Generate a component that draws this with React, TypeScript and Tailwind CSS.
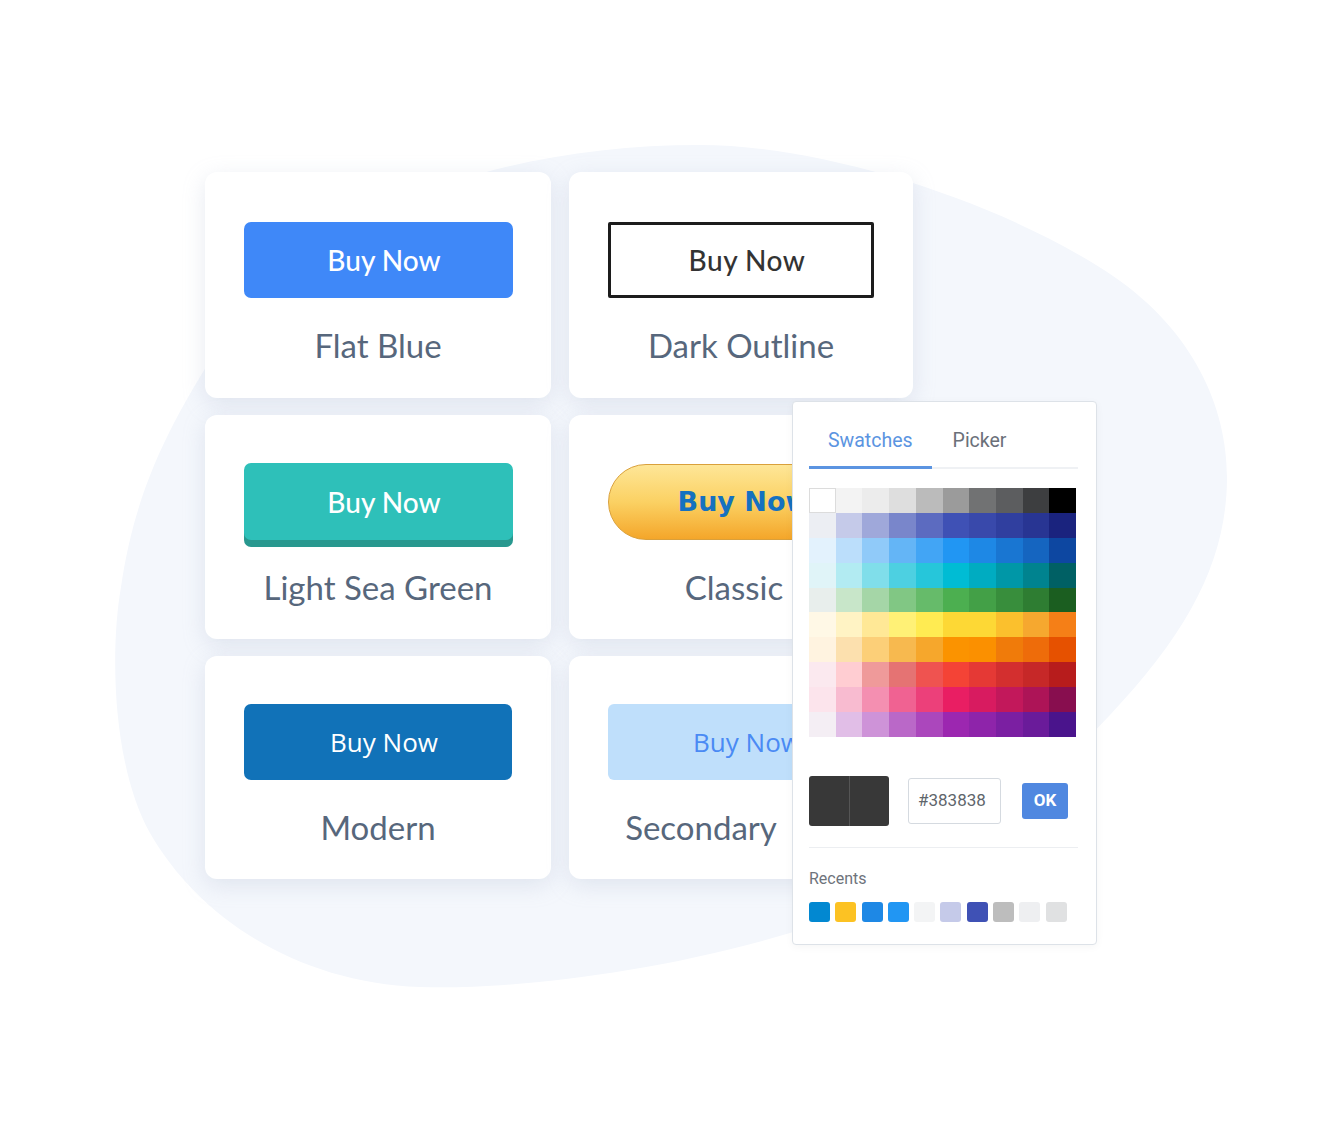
import React from 'react';

const SWATCHES: string[][] = [
  ['#ffffff', '#f3f3f3', '#ececec', '#dedede', '#bbbbbb', '#9b9b9b', '#717273', '#5c5d5f', '#3d3e40', '#000000'],
  ['#eceef3', '#c5cae9', '#9fa8da', '#7986cb', '#5c6bc0', '#3f51b5', '#3949ab', '#303f9f', '#283593', '#1a237e'],
  ['#e3f2fd', '#bbdefb', '#90caf9', '#64b5f6', '#42a5f5', '#2196f3', '#1e88e5', '#1976d2', '#1565c0', '#0d47a1'],
  ['#e0f4f8', '#b2ebf2', '#80deea', '#4dd0e1', '#26c6da', '#00bcd4', '#00acc1', '#0097a7', '#00838f', '#006064'],
  ['#e8eeec', '#c8e6c9', '#a5d6a7', '#81c784', '#66bb6a', '#4caf50', '#43a047', '#388e3c', '#2e7d32', '#1b5e20'],
  ['#fff8e6', '#fff3c4', '#ffe896', '#fff176', '#ffeb52', '#fdd835', '#fdd835', '#fbc02d', '#f6a82f', '#f57f17'],
  ['#fff3e0', '#fce0ae', '#fccf78', '#f7b94f', '#f6a72c', '#fb9300', '#fb9000', '#f07b0a', '#ee6c0a', '#e65100'],
  ['#fbe9ef', '#ffcdd2', '#ef9a9a', '#e57373', '#ef5350', '#f44336', '#e53935', '#d32f2f', '#c62828', '#b71c1c'],
  ['#fce4ec', '#f8bbd0', '#f48fb1', '#f06292', '#ec407a', '#e91e63', '#d81b60', '#c2185b', '#ad1457', '#880e4f'],
  ['#f4eef4', '#e1bee7', '#ce93d8', '#ba68c8', '#ab47bc', '#9c27b0', '#8e24aa', '#7b1fa2', '#6a1b9a', '#4a148c'],
];

const RECENTS = ['#0288d1', '#fcc223', '#1e88e5', '#2196f3', '#f3f4f5', '#c5cae9', '#3f51b5', '#bdbdbd', '#eeeff1', '#e0e1e2'];

function Card({
  pt,
  label,
  labelClass = '',
  children,
}: {
  pt: string;
  label: string;
  labelClass?: string;
  children: React.ReactNode;
}) {
  return (
    <div className={`flex flex-col items-center overflow-hidden rounded-[12px] bg-white shadow-[0_6px_22px_rgba(165,178,202,0.27)] ${pt}`}>
      {children}
      <div className={`mt-[27px] whitespace-nowrap font-['Lato',sans-serif] text-[33px] leading-[40px] text-[#57677c] ${labelClass}`}>
        {label}
      </div>
    </div>
  );
}

function Picker() {
  return (
    <div className="absolute left-[587px] top-[229px] z-10 h-[544px] w-[305px] rounded-[4px] border border-[#dde2e8] bg-white pl-[16px] pr-[18px] pt-[24px] font-['Roboto',sans-serif] shadow-[0_2px_8px_rgba(0,0,0,0.04)]">
      <div className="relative flex">
        <div className="absolute bottom-0 left-0 right-0 h-[2px] bg-[#eff1f4]" />
        <div className="relative border-b-[3px] border-[#5b94e1] px-[19px] pb-[10px] text-[19.5px] leading-[30px] text-[#5b94e1]">
          Swatches
        </div>
        <div className="relative border-b-[3px] border-transparent px-[21px] pb-[10px] text-[19.5px] leading-[30px] text-[#6b7079]">
          Picker
        </div>
      </div>

      <div className="mt-[19px] grid h-[249px] w-[267px] grid-cols-10 grid-rows-10">
        {SWATCHES.map((row, r) =>
          row.map((c, i) => (
            <div
              key={`${r}-${i}`}
              className={r === 0 && i === 0 ? 'border border-[#dcdcdc]' : ''}
              style={{ backgroundColor: c }}
            />
          ))
        )}
      </div>

      <div className="mt-[39px] flex h-[50px] items-center">
        <div className="flex h-[50px] w-[80px] overflow-hidden rounded-[3px]">
          <div className="flex-1 bg-[#383838]" />
          <div className="w-px bg-[#555555]" />
          <div className="flex-1 bg-[#383838]" />
        </div>
        <div className="ml-[19px] flex h-[46px] w-[93px] items-center rounded-[3px] border border-[#d5dae0] pl-[9px] text-[17px] text-[#60656b]">
          #383838
        </div>
        <div className="ml-[21px] flex h-[36px] w-[46px] items-center justify-center rounded-[3px] bg-[#5088e0] text-[17px] font-bold text-white">
          OK
        </div>
      </div>

      <div className="mt-[21px] h-px w-[269px] bg-[#eceef1]" />

      <div className="mt-[21px] text-[16px] leading-[20px] text-[#6e737b]">Recents</div>

      <div className="mt-[13px] flex gap-[5.3px]">
        {RECENTS.map((c, i) => (
          <div key={i} className="h-[20px] w-[21px] rounded-[3px]" style={{ backgroundColor: c }} />
        ))}
      </div>
    </div>
  );
}

export default function App() {
  return (
    <div className="relative h-[1132px] w-[1340px] overflow-hidden bg-white">
      <svg className="absolute left-0 top-0" width="1340" height="1132" viewBox="0 0 1340 1132">
        <path
          d="M 700 145 C 820 145 1000 200 1113 276 C 1195 332 1228 410 1227 480 C 1226 560 1190 630 1110 715 C 1020 810 900 900 790 933 C 650 975 500 990 420 987 C 300 983 200 920 150 833 C 112 765 110 650 121 587 C 135 490 170 420 230 330 C 320 210 500 145 700 145 Z"
          fill="#f4f7fc"
        />
      </svg>

      <div className="relative pl-[205px] pt-[172px]">
        <div className="relative grid w-max grid-cols-[346px_344px] grid-rows-[226px_224px_223px] gap-x-[18px] gap-y-[17px]">
          <Card pt="pt-[50px]" label="Flat Blue">
            <div className="flex h-[76px] w-[269px] items-center justify-center rounded-[7px] bg-[#3f88f8] pl-[12px] font-['Lato',sans-serif] text-[28px] font-medium text-white">
              Buy Now
            </div>
          </Card>

          <Card pt="pt-[50px]" label="Dark Outline">
            <div className="flex h-[76px] w-[266px] items-center justify-center rounded-[2px] border-[3px] border-[#1c1c1c] pl-[12px] font-['Lato',sans-serif] text-[28px] font-medium tracking-[0.5px] text-[#333333]">
              Buy Now
            </div>
          </Card>

          <Card pt="pt-[48px]" label="Light Sea Green">
            <div className="flex h-[77px] w-[269px] items-center justify-center rounded-[7px] bg-[#2ec0b9] pl-[12px] font-['Lato',sans-serif] text-[28px] font-medium text-white shadow-[0_7px_0_#28988f]">
              Buy Now
            </div>
          </Card>

          <Card pt="pt-[49px]" label="Classic" labelClass="mr-[14px]">
            <div className="flex h-[76px] w-[266px] items-center justify-center rounded-full border border-[#d9a03c] bg-[linear-gradient(to_bottom,#fee697,#fbd163_50%,#f4a62a)] pl-[6px] font-['DejaVu_Sans',sans-serif] text-[27px] font-bold text-[#1571c0]">
              Buy Now
            </div>
          </Card>

          <Card pt="pt-[48px]" label="Modern">
            <div className="flex h-[76px] w-[268px] items-center justify-center rounded-[7px] bg-[#1172b8] pl-[12px] font-['Open_Sans',sans-serif] text-[26px] text-white">
              Buy Now
            </div>
          </Card>

          <Card pt="pt-[48px]" label="Secondary" labelClass="mr-[80px]">
            <div className="flex h-[76px] w-[266px] items-center justify-center rounded-[6px] bg-[#bfdffb] pl-[12px] font-['Open_Sans',sans-serif] text-[26px] font-medium text-[#4a8af4]">
              Buy Now
            </div>
          </Card>

          <Picker />
        </div>
      </div>
    </div>
  );
}
